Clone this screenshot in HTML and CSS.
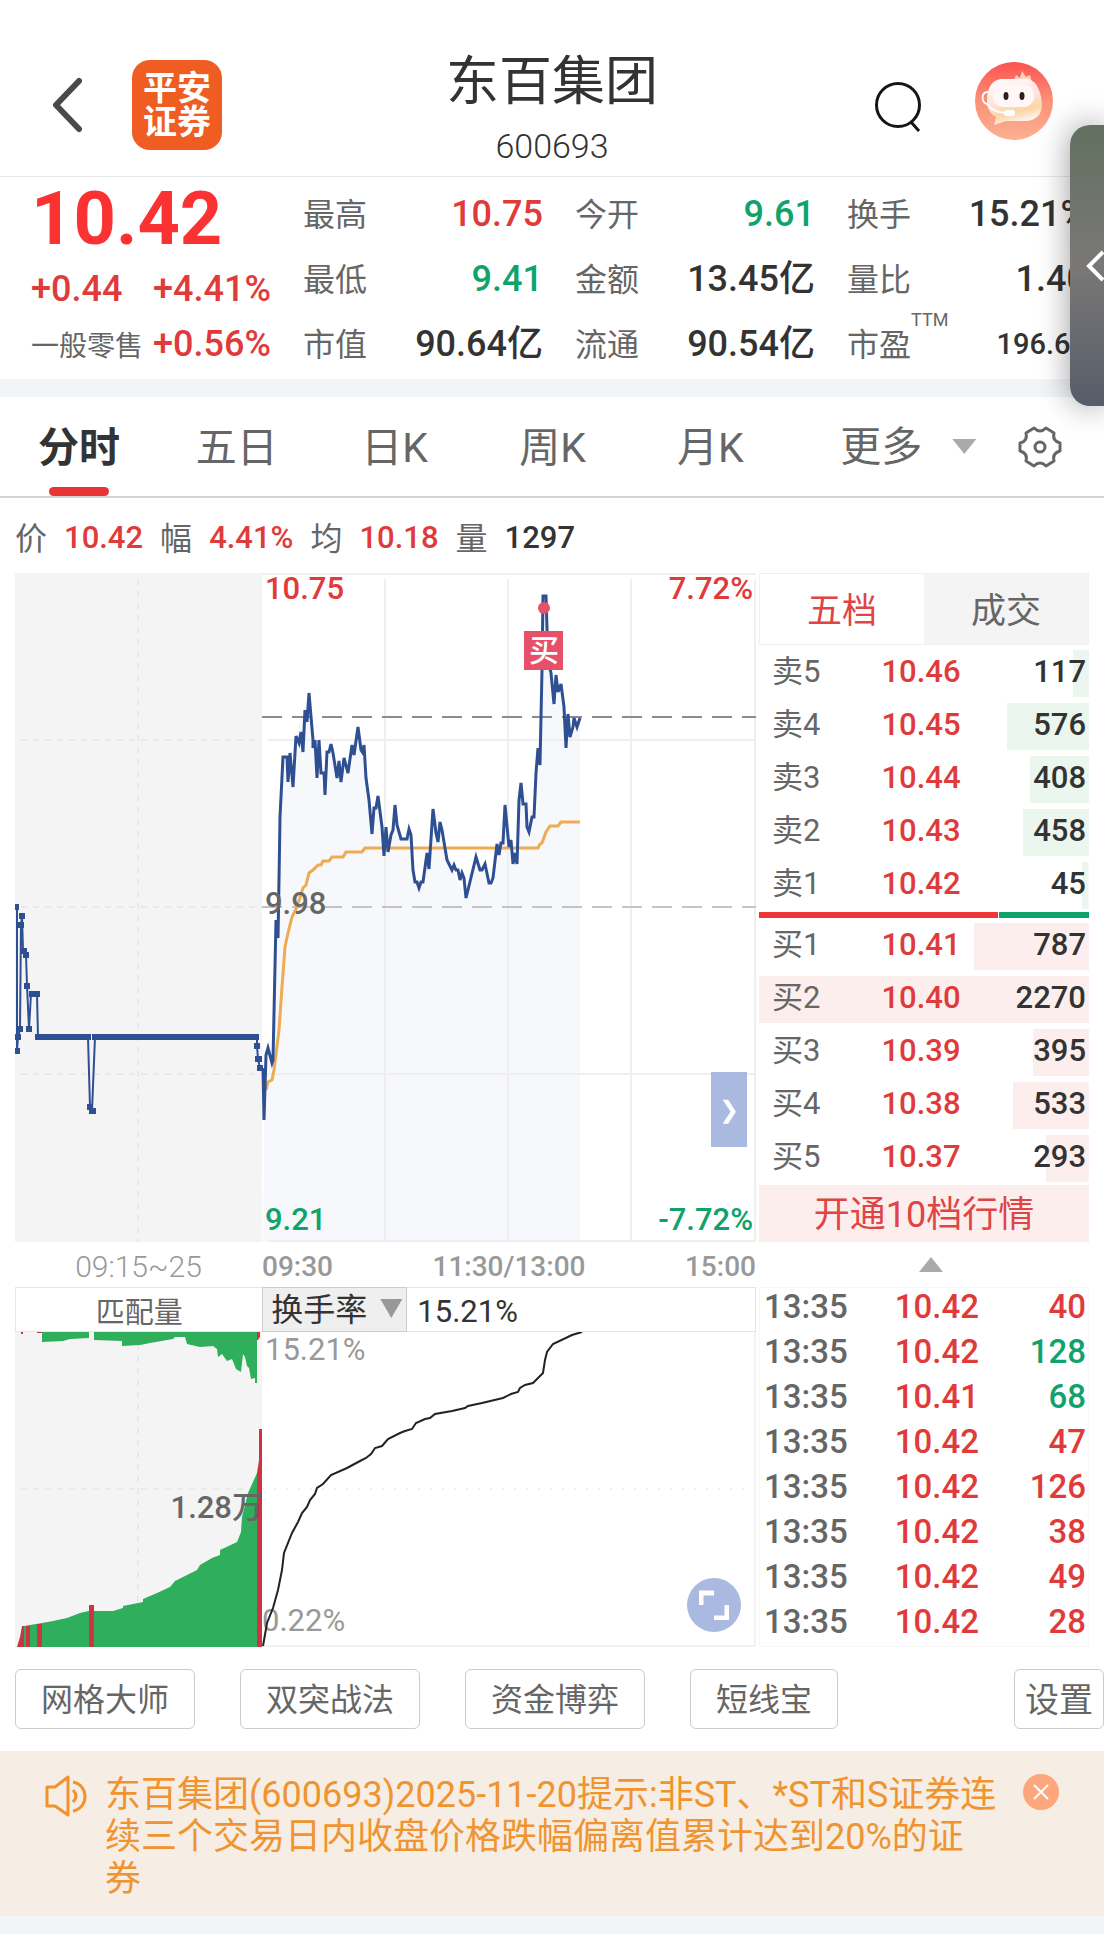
FILE: index.html
```html
<!DOCTYPE html>
<html lang="zh-CN">
<head>
    <meta charset="UTF-8">
    <meta name="viewport" content="width=device-width, initial-scale=1.0">
    <title>东百集团 600693</title>
    <link rel="stylesheet" href="styles.css">
</head>
<body>
    <header class="top-bar">
        <div class="top-left">
            <button class="icon-button" aria-label="返回">
                <svg width="32" height="56" viewBox="0 0 32 56"><path d="M28 4 L5 28 L28 52" fill="none" stroke="#4a4a4a" stroke-width="6" stroke-linecap="round" stroke-linejoin="round"/></svg>
            </button>
            <a href="#" class="broker-logo"><span>平安</span><span>证券</span></a>
        </div>
        <div class="stock-title">
            <h1>东百集团</h1>
            <p>600693</p>
        </div>
        <div class="top-right">
            <button class="icon-button" aria-label="搜索">
                <svg width="50" height="58" viewBox="0 0 50 58"><circle cx="25" cy="29" r="21.500" fill="none" stroke="#151515" stroke-width="3"/><path d="M38 46 L46 55" stroke="#151515" stroke-width="3"/></svg>
            </button>
            <button class="icon-button" aria-label="智能客服">
                <svg width="78" height="86" viewBox="0 0 78 86">
                    <defs>
                        <linearGradient id="botBg" x1="0" y1="0" x2="0" y2="1"><stop offset="0" stop-color="#fb5350"/><stop offset="0.5" stop-color="#fb9079"/><stop offset="1" stop-color="#fdb191"/></linearGradient>
                        <linearGradient id="botBody" x1="0" y1="0" x2="0.3" y2="1"><stop offset="0" stop-color="#fff"/><stop offset="0.55" stop-color="#fde3da"/><stop offset="0.8" stop-color="#fbd5a2"/><stop offset="1" stop-color="#fff1e8"/></linearGradient>
                    </defs>
                    <circle cx="39" cy="39" r="39" fill="url(#botBg)"/>
                    <path d="M39 18 L41 13 L45 16 L47 9 L51 15 L55 13 L57 21 Z" fill="#fdd3c9"/>
                    <path d="M26 17 H52 C62 18 66 30 67 42 C67 53 61 58 52 59 H31 L19 63 L21 55 C14 51 12 45 12 38 C12 26 17 18 26 17 Z" fill="url(#botBody)"/>
                    <rect x="18" y="23" width="41" height="22" rx="10" fill="#fff8f6"/>
                    <ellipse cx="31" cy="34" rx="2.500" ry="4" fill="#2b2020"/>
                    <ellipse cx="47" cy="34" rx="2.500" ry="4" fill="#2b2020"/>
                    <path d="M13 30 C6 29 6 41 12 42 C16 48 23 51 33 51" fill="none" stroke="#fff" stroke-width="2"/>
                    <rect x="29" y="48" width="11" height="6" rx="3" fill="#fff"/>
                </svg>
            </button>
        </div>
    </header>

    <section class="quote">
        <div class="quote-main">
            <div class="last-price">10.42</div>
            <div class="change-row"><span>+0.44</span><span>+4.41%</span></div>
            <div class="change-row"><span class="sector">一般零售</span><span>+0.56%</span></div>
        </div>
        <dl class="stats">
            <div><dt>最高</dt><dd class="up">10.75</dd></div>
            <div><dt>今开</dt><dd class="down">9.61</dd></div>
            <div><dt>换手</dt><dd>15.21%</dd></div>
            <div><dt>最低</dt><dd class="down">9.41</dd></div>
            <div><dt>金额</dt><dd>13.45亿</dd></div>
            <div><dt>量比</dt><dd>1.40</dd></div>
            <div><dt>市值</dt><dd>90.64亿</dd></div>
            <div><dt>流通</dt><dd>90.54亿</dd></div>
            <div><dt>市盈<sup>TTM</sup></dt><dd class="small">196.62</dd></div>
        </dl>
        <button class="side-handle" aria-label="展开侧栏">
            <svg width="18" height="34" viewBox="0 0 18 34"><path d="M17 3 L3 17 L17 31" fill="none" stroke="#fff" stroke-width="4"/></svg>
        </button>
    </section>

    <nav class="period-tabs">
        <a href="#" class="active">分时</a>
        <a href="#">五日</a>
        <a href="#">日K</a>
        <a href="#">周K</a>
        <a href="#">月K</a>
        <a href="#" class="more">更多</a>
        <button class="icon-button" aria-label="图表设置">
            <svg width="44" height="44" viewBox="0 0 44 44" fill="none" stroke="#666" stroke-width="3" stroke-linejoin="round"><path d="M16 3 Q22 9 28 3 L36 8 Q34 16 42 18 V26 Q34 28 36 36 L28 41 Q22 35 16 41 L8 36 Q10 28 2 26 V18 Q10 16 8 8 Z"/><circle cx="22" cy="22" r="5"/></svg>
        </button>
    </nav>

    <div class="cursor-info">
        <span>价</span><b class="up">10.42</b>
        <span>幅</span><b class="up">4.41%</b>
        <span>均</span><b class="up">10.18</b>
        <span>量</span><b>1297</b>
    </div>

    <main class="market">
        <div class="charts">
            <div class="chart-box">
                <svg class="chart" viewBox="15 573 741 669">
                    <!-- call auction -->
                    <rect x="15" y="573" width="247" height="669" fill="#f4f4f4"/>
                    <g stroke="#e9e9e9" stroke-width="2" stroke-dasharray="6 6">
                        <path d="M138 579 V1242"/>
                        <path d="M21 740 H262 M21 907 H262 M21 1074 H262"/>
                    </g>
                    <!-- price area -->
                    <path fill="#f6f8fb" d="M263 1242 L264 1120 L266 1055 L272 1063 L276 920 L280 817 L283 757 L293 787 L296 736 L309 693 L313 748 L325 795 L331 744 L341 782 L358 727 L364 745 L372 834 L378 796 L384 856 L395 805 L401 839 L409 829 L415 882 L423 882 L433 809 L440 822 L452 870 L466 898 L476 857 L491 883 L497 844 L505 805 L517 864 L521 783 L534 817 L538 748 L543 596 L546 596 L554 704 L561 684 L566 748 L580 718 V1242 Z"/>
                    <g stroke="#efefef" stroke-width="2">
                        <path d="M262 574 H756 M268 740 H756 M262 1074 H756 M268 1241 H756"/>
                        <path d="M385 579 V1242 M508 579 V1242 M631 579 V1242 M755 579 V1242"/>
                    </g>
                    <path d="M262 907 H756" stroke="#c4c4c4" stroke-width="2" stroke-dasharray="20 10"/>
                    <path d="M262 717 H756" stroke="#8c8c8c" stroke-width="2" stroke-dasharray="20 10"/>
                    <!-- average -->
                    <path class="line-avg" d="M266 1090 L268 1082 L272 1080 L274 1070 L279 1030 L282 987 L285 947 L288 933 L292 917 L297 907 L303 888 L306 885 L309 873 L313 870 L318 865 L321 865 L323 861 L329 861 L332 857 L343 857 L346 852 L362 852 L365 848 L538 848 L540 844 L542 843 L546 832 L550 826 L558 826 L561 822 L580 822"/>
                    <!-- auction price -->
                    <path class="line-pre" d="M17 907 L17 1051 L18 1037 L20 1029 L21 925 L22 916 L23 950 L26 955 L27 985 L29 1029 L31 994 L37 994 L38 1037 L88 1037 L90 1107 L92 1111 L95 1037 L257 1037 L257 1046 L258 1059 L260 1068 L263 1068"/>
                    <path stroke="#2f4f93" stroke-width="6" d="M15 907 h4 M15 1051 h5 M15 1037 h6 M17 1029 h6 M18 925 h6 M19 916 h6 M20 951 h7 M23 955 h6 M24 986 h6 M26 1029 h6 M29 994 h11 M35 1037 H91 M92 1037 H259 M87 1107 h6 M89 1111 h7 M254 1046 h6 M255 1059 h7 M257 1068 h6"/>
                    <!-- price -->
                    <path class="line-price" d="M263 1068 L264 1120 L266 1055 L268 1048 L272 1063 L273 1060 L276 920 L278 938 L279 880 L280 817 L283 757 L287 757 L288 782 L290 753 L293 787 L296 736 L299 743 L301 732 L303 752 L305 710 L307 722 L309 693 L313 740 L313 748 L315 740 L317 778 L319 740 L321 773 L324 773 L325 795 L327 752 L329 752 L331 744 L333 753 L337 778 L339 761 L341 782 L344 758 L348 773 L352 745 L354 755 L358 727 L361 750 L363 753 L364 745 L366 778 L369 800 L372 834 L374 808 L376 808 L378 796 L382 827 L384 856 L386 827 L388 852 L391 835 L393 830 L395 805 L397 825 L401 839 L407 839 L409 829 L411 835 L413 870 L415 882 L417 882 L419 888 L421 882 L423 882 L427 853 L429 869 L433 809 L436 833 L438 842 L440 822 L442 830 L447 860 L452 870 L454 865 L456 870 L458 870 L460 880 L462 873 L464 878 L466 898 L468 890 L476 857 L480 870 L482 870 L485 864 L489 883 L491 883 L493 878 L497 844 L499 855 L501 843 L503 843 L505 805 L509 847 L511 840 L513 864 L515 853 L517 864 L519 800 L521 783 L523 804 L526 804 L527 827 L529 832 L532 817 L534 817 L536 773 L538 748 L540 765 L542 670 L543 596 L546 596 L548 660 L551 673 L554 704 L556 675 L558 692 L561 684 L564 707 L566 748 L568 714 L570 737 L573 727 L574 718 L577 727 L580 718"/>
                    <circle cx="544" cy="608" r="6" fill="#e65068"/>
                    <rect x="524" y="631" width="39" height="39" fill="#e65068"/>
                    <text x="544" y="661" class="mark" text-anchor="middle">买</text>
                    <text x="265" y="599" class="label up">10.75</text>
                    <text x="753" y="599" class="label up" text-anchor="end">7.72%</text>
                    <text x="265" y="914" class="label mid">9.98</text>
                    <text x="265" y="1230" class="label down">9.21</text>
                    <text x="753" y="1230" class="label down" text-anchor="end">-7.72%</text>
                </svg>
                <button class="expand-side" aria-label="展开">❯</button>
            </div>
            <div class="time-axis">
                <span class="pre">09:15~25</span>
                <div><b>09:30</b><b>11:30/13:00</b><b>15:00</b></div>
            </div>
            <div class="sub-head">
                <span class="pre">匹配量</span>
                <div class="pick">
                    <select aria-label="副图指标"><option>换手率</option></select>
                </div>
                <span class="sub-value">15.21%</span>
            </div>
            <div class="chart-box">
                <svg class="chart" viewBox="15 1332 741 315">
                    <rect x="15" y="1332" width="247" height="315" fill="#f4f4f4"/>
                    <path d="M138 1332 V1647 M21 1489 H262" stroke="#e9e9e9" stroke-width="2" stroke-dasharray="6 6"/>
                    <path d="M262 1489 H756" stroke="#efefef" stroke-width="2" stroke-dasharray="2 10"/>
                    <path d="M262 1646 H755 V1332" fill="none" stroke="#f2f2f2" stroke-width="2"/>
                    <!-- unmatched volume -->
                    <path fill="#2fae5b" d="M42 1332 V1342 L63 1341 L70 1339 L89 1338 V1332 H94 V1340 L122 1341 V1346 L140 1345 L150 1343 L173 1339 L175 1337 L185 1337 L187 1344 L200 1347 L213 1346 L217 1349 L218 1357 L222 1354 L227 1361 L232 1359 L236 1369 L241 1372 L243 1354 L245 1357 L247 1366 L249 1368 L251 1379 L255 1378 L255 1383 H257 V1332 Z"/>
                    <path fill="#cc3344" d="M257 1332 H260 V1337 L258 1340 H257 Z M21 1332 h2 v2 h-2 Z M37 1332 h5 v1 h-5 Z"/>
                    <!-- matched volume -->
                    <path fill="#2fae5b" d="M24 1647 V1626 L42 1623 L53 1621 L67 1618 L80 1613 L89 1611 L113 1611 L123 1608 L123 1606 L143 1602 L143 1599 L157 1593 L170 1587 L175 1581 L197 1570 L200 1565 L212 1558 L220 1555 L220 1550 L237 1542 L241 1532 L242 1517 L248 1493 L257 1473 V1647 Z"/>
                    <path fill="#cc3344" d="M17 1647 L20 1637 L22 1626 H24 V1647 Z M26 1626 h4 v21 h-4 Z M37 1624 h5 v23 h-5 Z M89 1605 h5 v42 h-5 Z M257 1473 L259 1460 V1429 H262 V1647 H257 Z"/>
                    <text x="263" y="1518" class="label mid" text-anchor="end">1.28万</text>
                    <text x="265" y="1360" class="label axis">15.21%</text>
                    <text x="262" y="1631" class="label axis">0.22%</text>
                    <path class="line-turnover" d="M263 1646 L267 1623 L273 1608 L278 1590 L282 1570 L284 1553 L292 1533 L298 1522 L302 1513 L307 1507 L310 1500 L315 1494 L317 1488 L323 1484 L331 1475 L347 1468 L360 1461 L366 1458 L371 1454 L375 1448 L382 1446 L388 1439 L400 1433 L405 1431 L412 1429 L416 1423 L425 1419 L430 1418 L435 1414 L452 1411 L465 1408 L468 1406 L482 1403 L503 1398 L511 1394 L518 1392 L520 1388 L525 1385 L533 1383 L538 1378 L543 1373 L545 1360 L547 1352 L553 1344 L572 1335 L582 1332"/>
                </svg>
                <button class="fullscreen" aria-label="全屏">
                    <svg width="30" height="30" viewBox="0 0 30 30" fill="none" stroke="#fff" stroke-width="5"><path d="M2 15 V3 H15 M28 15 V28 H15"/></svg>
                </button>
            </div>
        </div>

        <aside class="book">
            <div class="book-tabs">
                <button class="on">五档</button>
                <button>成交</button>
            </div>
            <table class="ladder sell">
                <tr style="--w:5%"><th>卖5</th><td>10.46</td><td>117</td></tr>
                <tr style="--w:25%"><th>卖4</th><td>10.45</td><td>576</td></tr>
                <tr style="--w:18%"><th>卖3</th><td>10.44</td><td>408</td></tr>
                <tr style="--w:20%"><th>卖2</th><td>10.43</td><td>458</td></tr>
                <tr style="--w:2%"><th>卖1</th><td>10.42</td><td>45</td></tr>
            </table>
            <div class="ratio"><i></i><i></i></div>
            <table class="ladder buy">
                <tr style="--w:35%"><th>买1</th><td>10.41</td><td>787</td></tr>
                <tr style="--w:100%"><th>买2</th><td>10.40</td><td>2270</td></tr>
                <tr style="--w:17%"><th>买3</th><td>10.39</td><td>395</td></tr>
                <tr style="--w:23%"><th>买4</th><td>10.38</td><td>533</td></tr>
                <tr style="--w:13%"><th>买5</th><td>10.37</td><td>293</td></tr>
            </table>
            <button class="open-level">开通10档行情</button>
            <button class="collapse" aria-label="收起"><svg width="24" height="15" viewBox="0 0 24 15"><path d="M12 0 L24 15 H0 Z" fill="#aaa"/></svg></button>
            <table class="ticks">
                <tr><td>13:35</td><td>10.42</td><td class="up">40</td></tr>
                <tr><td>13:35</td><td>10.42</td><td class="down">128</td></tr>
                <tr><td>13:35</td><td>10.41</td><td class="down">68</td></tr>
                <tr><td>13:35</td><td>10.42</td><td class="up">47</td></tr>
                <tr><td>13:35</td><td>10.42</td><td class="up">126</td></tr>
                <tr><td>13:35</td><td>10.42</td><td class="up">38</td></tr>
                <tr><td>13:35</td><td>10.42</td><td class="up">49</td></tr>
                <tr><td>13:35</td><td>10.42</td><td class="up">28</td></tr>
            </table>
        </aside>
    </main>

    <div class="tools">
        <button>网格大师</button>
        <button>双突战法</button>
        <button>资金博弈</button>
        <button>短线宝</button>
        <button class="settings">设置</button>
    </div>

    <div class="notice">
        <svg class="speaker" width="42" height="42" viewBox="0 0 42 42" fill="none" stroke="#f0922e" stroke-width="3" stroke-linejoin="round"><path d="M2 12 H10 L23 2 V40 L10 31 H2 Z"/><path d="M28 15 Q34 21 28 27 M28 7 C44 10 44 33 28 36"/></svg>
        <p>东百集团(600693)2025-11-20提示:非ST、*ST和S证券连<br>续三个交易日内收盘价格跌幅偏离值累计达到20%的证<br>券</p>
        <button class="icon-button close" aria-label="关闭">
            <svg width="36" height="36" viewBox="0 0 36 36"><circle cx="18" cy="18" r="18" fill="#ffa77c"/><path d="M11 11 L25 25 M25 11 L11 25" stroke="#fff" stroke-width="2"/></svg>
        </button>
    </div>
    <div class="band"></div>
</body>
</html>
```
FILE: styles.css
```css
* {
    box-sizing: border-box;
}

body {
    margin: 0;
    background: #fff;
    color: #333;
    font-family: Roboto, "Noto Sans CJK SC", sans-serif;
    font-size: 32px;
    overflow-x: hidden;
}

h1, p, dl, dd {
    margin: 0;
}

button {
    font: inherit;
    color: inherit;
    border: none;
    background: none;
    padding: 0;
    cursor: pointer;
}

a {
    color: inherit;
    text-decoration: none;
}

.up {
    color: #e03a3a;
    fill: #e03a3a;
}

.down {
    color: #0fa36b;
    fill: #0fa36b;
}

.icon-button {
    display: flex;
}

/* header */
.top-bar {
    display: grid;
    grid-template-columns: 1fr auto 1fr;
    align-items: center;
    height: 177px;
    padding: 34px 51px 0;
    border-bottom: 1px solid #e8e8e8;
}

.top-left, .top-right {
    display: flex;
    align-items: center;
    gap: 49px;
}

.top-right {
    justify-content: flex-end;
    gap: 52px;
}

.broker-logo {
    display: flex;
    flex-direction: column;
    justify-content: center;
    width: 90px;
    height: 90px;
    border-radius: 18px;
    background: #f05d23;
    color: #fff;
    font-size: 34px;
    font-weight: 700;
    line-height: 34px;
    text-align: center;
}

.stock-title {
    padding-top: 14px;
    text-align: center;
}

.stock-title h1 {
    font-size: 53px;
    font-weight: 400;
    line-height: 68px;
}

.stock-title p {
    font-size: 34px;
    font-weight: 300;
    line-height: 60px;
}

/* quote */
.quote {
    position: relative;
    display: grid;
    grid-template-columns: 240px 1fr;
    gap: 32px;
    height: 202px;
    padding: 2px 17px 0 31px;
}

.last-price {
    height: 82px;
    color: #fa3232;
    font-size: 74px;
    font-weight: 700;
    line-height: 80px;
}

.change-row {
    display: flex;
    justify-content: space-between;
    align-items: center;
    height: 55px;
    color: #e03a3a;
    font-size: 36px;
    font-weight: 500;
    white-space: nowrap;
}

.sector {
    color: #666;
    font-size: 28px;
    font-weight: 400;
}

.stats {
    display: grid;
    grid-template-columns: repeat(3, 1fr);
    column-gap: 32px;
    grid-auto-rows: 65px;
}

.stats div {
    display: flex;
    justify-content: space-between;
    align-items: center;
}

.stats dt {
    color: #666;
    white-space: nowrap;
}

.stats sup {
    font-size: 18px;
    line-height: 0;
    vertical-align: 30px;
}

.stats dd {
    padding-top: 4px;
    font-size: 36px;
    font-weight: 500;
    line-height: 60px;
}

.stats dd.small {
    font-size: 29px;
}

.side-handle {
    position: absolute;
    top: -52px;
    right: 0;
    display: flex;
    align-items: center;
    justify-content: flex-end;
    width: 34px;
    height: 281px;
    border-radius: 20px 0 0 20px;
    background: linear-gradient(#62705f, #7a7877 50%, #565d68);
    box-shadow: 0 0 32px rgba(0, 0, 0, 0.4);
    z-index: 2;
}

/* tabs */
.period-tabs {
    display: flex;
    align-items: center;
    height: 119px;
    border-top: 18px solid #f2f4f8;
    border-bottom: 2px solid #d4d4d4;
    color: #666;
    font-size: 41px;
}

.period-tabs a {
    position: relative;
    width: 14.3%;
    padding-top: 3px;
    line-height: 96px;
    text-align: center;
}

.period-tabs .active {
    color: #333;
    font-weight: 700;
}

.period-tabs .active::after {
    content: "";
    position: absolute;
    left: calc(50% - 30px);
    bottom: 0;
    width: 60px;
    height: 9px;
    border-radius: 5px;
    background: #e83434;
}

.period-tabs .more {
    display: flex;
    align-items: center;
    gap: 30px;
    width: auto;
    padding: 0 42px 0 51px;
}

.period-tabs .more::after {
    content: "";
    width: 24px;
    height: 15px;
    background: #aaa;
    clip-path: polygon(0 0, 100% 0, 50% 100%);
}

.cursor-info {
    display: flex;
    align-items: center;
    gap: 17px;
    height: 75px;
    padding: 0 15px;
    color: #666;
}

.cursor-info b {
    padding-top: 3px;
    font-size: 31px;
    font-weight: 500;
}

.cursor-info b:last-child {
    color: #333;
}

/* charts */
.market {
    display: grid;
    grid-template-columns: 741fr 330fr;
    gap: 3px;
    padding: 0 15px;
}

.chart-box {
    position: relative;
}

.chart {
    display: block;
    width: 100%;
}

.line-price, .line-avg, .line-pre, .line-turnover {
    fill: none;
    stroke: #2f4f93;
    stroke-width: 3;
}

.line-pre {
    stroke-width: 2;
}

.line-avg {
    stroke: #eeab52;
}

.line-turnover {
    stroke: #222;
    stroke-width: 2;
}

.label {
    font-size: 31px;
    font-weight: 500;
}

.mark {
    fill: #fff;
    font-size: 30px;
    font-weight: 500;
}

.mid {
    fill: #666;
}

.axis {
    fill: #999;
    font-weight: 400;
}

.expand-side {
    position: absolute;
    right: 9px;
    bottom: 95px;
    width: 36px;
    height: 75px;
    background: #a9b9df;
    color: #fff;
    font-size: 24px;
}

.time-axis {
    display: flex;
    align-items: center;
    height: 45px;
    padding-top: 3px;
    color: #999;
    font-size: 28px;
}

.time-axis div {
    flex: 1;
    display: flex;
    justify-content: space-between;
}

.time-axis b {
    font-weight: 500;
}

.time-axis .pre {
    font-size: 30px;
    font-weight: 300;
}

.pre {
    width: 33.333%;
    text-align: center;
}

.sub-head {
    display: flex;
    align-items: center;
    height: 45px;
    border: 1px solid #e6e6e6;
    font-size: 29px;
}

.sub-head .pre {
    color: #666;
}

.pick {
    position: relative;
    width: 145px;
    height: 45px;
}

.pick select {
    appearance: none;
    width: 100%;
    height: 100%;
    padding: 0 8px;
    border: 1px solid #ccc;
    border-radius: 0;
    background: #efefef;
    color: #333;
    font: inherit;
    font-size: 32px;
}

.pick::after {
    content: "";
    position: absolute;
    right: 5px;
    top: 12px;
    width: 22px;
    height: 19px;
    background: #999;
    clip-path: polygon(0 0, 100% 0, 50% 100%);
}

.sub-value {
    padding: 3px 0 0 10px;
    font-size: 31px;
}

.fullscreen {
    position: absolute;
    right: 15px;
    bottom: 15px;
    display: flex;
    align-items: center;
    justify-content: center;
    width: 54px;
    height: 54px;
    border-radius: 50%;
    background: #a9b9df;
}

/* order book */
.book {
    display: flex;
    flex-direction: column;
}

.book-tabs {
    display: flex;
    height: 72px;
    margin-bottom: 2px;
    border: 1px solid #f0f0f0;
    font-size: 35px;
}

.book-tabs button {
    flex: 1;
    padding-bottom: 4px;
    background: #f4f4f4;
    color: #666;
}

.book-tabs .on {
    background: #fff;
    color: #e04444;
}

table {
    width: 100%;
    border-collapse: collapse;
    table-layout: fixed;
}

.ladder tr {
    height: 53px;
    background-image: linear-gradient(#eaf6ee, #eaf6ee);
    background-repeat: no-repeat;
    background-position: right center;
    background-size: var(--w) 47px;
}

.ladder.buy tr {
    background-image: linear-gradient(#fdeeee, #fdeeee);
}

.ladder th, .ladder td {
    height: 53px;
    padding: 0 3px 4px;
    line-height: 49px;
}

.ladder th {
    padding-left: 13px;
    color: #666;
    font-size: 31px;
    font-weight: 400;
    text-align: left;
}

.ladder td {
    color: #e03a3a;
    font-size: 31px;
    font-weight: 500;
    text-align: center;
}

.ladder td:nth-child(2) {
    padding-right: 9px;
}

.ladder td:last-child {
    color: #333;
    text-align: right;
}

.ratio {
    display: flex;
    gap: 1px;
    height: 6px;
    margin-bottom: 2px;
}

.ratio i {
    flex: 239;
    background: #ee3636;
}

.ratio i:last-child {
    flex: 90;
    background: #0fa36b;
}

.open-level {
    height: 57px;
    padding-top: 4px;
    background: #fdeeee;
    color: #e04444;
    font-size: 36px;
    line-height: 53px;
}

.collapse {
    display: flex;
    align-items: center;
    justify-content: center;
    height: 45px;
    padding-left: 14px;
}

.ticks {
    outline: 1px solid #f6f6f6;
    outline-offset: -1px;
}

.ticks td {
    height: 45px;
    padding: 0 3px 6px 5px;
    color: #666;
    font-size: 33px;
    font-weight: 500;
    line-height: 39px;
}

.ticks td:nth-child(2) {
    padding-right: 0;
    color: #e03a3a;
    text-align: right;
}

.ticks td:last-child {
    text-align: right;
}

.ticks .up {
    color: #e03a3a;
}

.ticks .down {
    color: #0fa36b;
}

/* tools */
.tools {
    display: flex;
    gap: 45px;
    padding: 22px 0 22px 15px;
    color: #666;
}

.tools button {
    height: 60px;
    padding: 2px 25px 0;
    border: 1px solid #ccc;
    border-radius: 6px;
    background: #fff;
    line-height: 56px;
}

.tools .settings {
    margin-left: auto;
    padding: 2px 10px 0;
    font-size: 34px;
}

/* notice */
.notice {
    display: flex;
    align-items: flex-start;
    padding: 23px 45px 16px;
    background: #f6eee4;
}

.notice p {
    flex: 1;
    padding: 0 20px 0 18px;
    color: #ef9430;
    font-size: 36px;
    line-height: 42px;
}

.speaker {
    flex: none;
    margin-top: 1px;
}

.band {
    height: 18px;
    background: #f2f4f8;
}
```
